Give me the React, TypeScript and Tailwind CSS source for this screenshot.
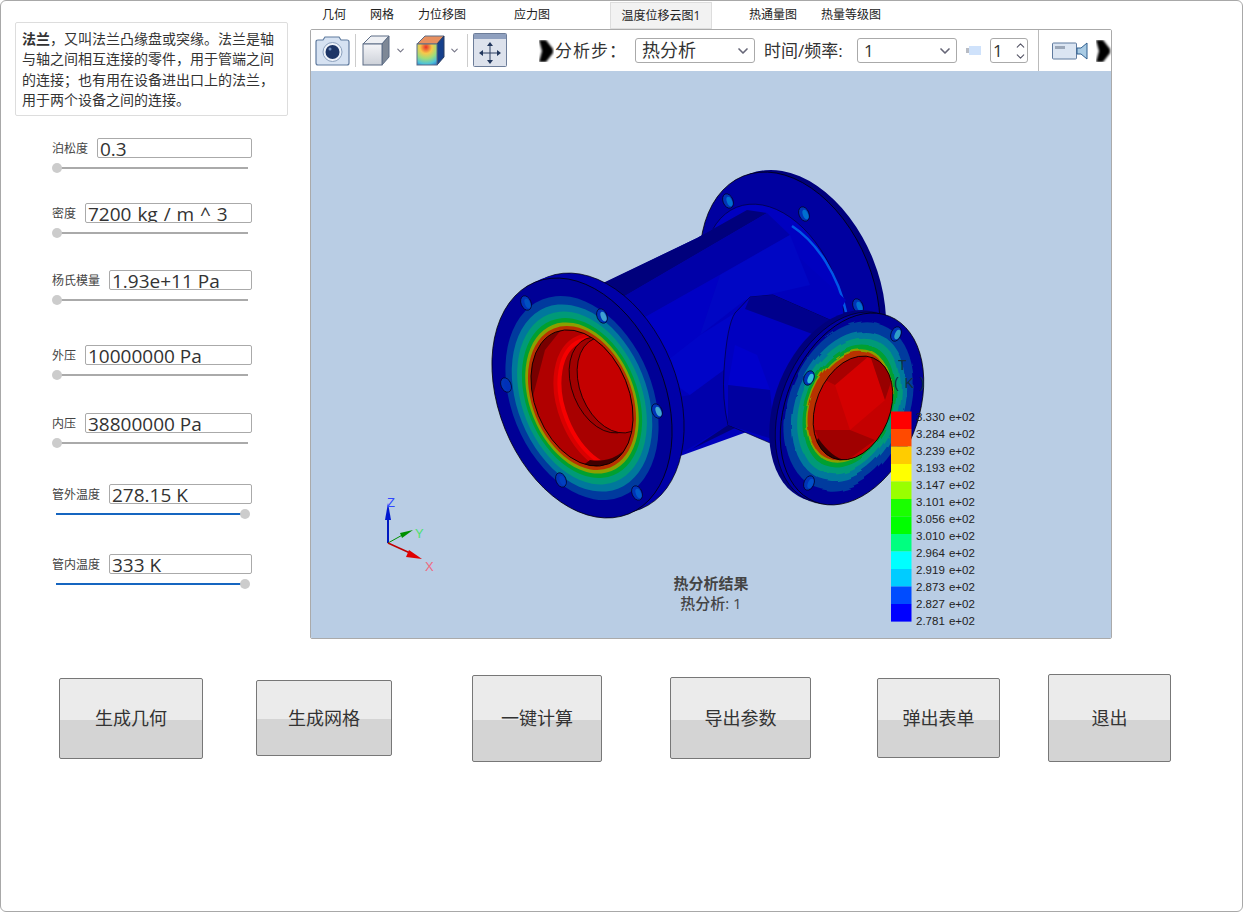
import { ChevronDown, ChevronUp } from 'lucide-react';

const params = [
  { label: '泊松度', value: '0.3', inputWidth: 'w-[155px]', top: 'mt-[22px]', full: false },
  { label: '密度', value: '7200 kg / m ^ 3', inputWidth: 'w-[167px] [word-spacing:1px]', top: 'mt-[25px]', full: false },
  { label: '杨氏模量', value: '1.93e+11 Pa', inputWidth: 'w-[143px]', top: 'mt-[27px]', full: false },
  { label: '外压', value: '10000000 Pa', inputWidth: 'w-[167px]', top: 'mt-[35px]', full: false },
  { label: '内压', value: '38800000 Pa', inputWidth: 'w-[167px]', top: 'mt-[28px]', full: false },
  { label: '管外温度', value: '278.15 K', inputWidth: 'w-[143px]', top: 'mt-[31px]', full: true },
  { label: '管内温度', value: '333 K', inputWidth: 'w-[143px]', top: 'mt-[30px]', full: true },
];

const buttons = [
  { label: '生成几何', cls: 'w-[144px] h-[81px]' },
  { label: '生成网格', cls: 'w-[136px] h-[76px] ml-[53px]' },
  { label: '一键计算', cls: 'w-[130px] h-[87px] ml-[80px]' },
  { label: '导出参数', cls: 'w-[141px] h-[82px] ml-[68px]' },
  { label: '弹出表单', cls: 'w-[123px] h-[80px] ml-[66px]' },
  { label: '退出', cls: 'w-[123px] h-[88px] ml-[48px]' },
];

const tabs = [
  { label: '几何', cls: 'ml-[12px] w-[24px]' },
  { label: '网格', cls: 'ml-[24px] w-[24px]' },
  { label: '力位移图', cls: 'ml-[24px] w-[48px]' },
  { label: '应力图', cls: 'ml-[48px] w-[36px]' },
];

const legendColors = ['#ff0000', '#ff4a00', '#ffcc00', '#ffff00', '#99ff00', '#1aff00', '#00ff00', '#00ff80', '#00ffff', '#00ccff', '#004cff', '#0000ff'];
const legendLabels = ['3.330', '3.284', '3.239', '3.193', '3.147', '3.101', '3.056', '3.010', '2.964', '2.919', '2.873', '2.827', '2.781'];

const leftBands = [
  { s: 1, c: '#000096' },
  { s: 0.85, c: '#003a9e' },
  { s: 0.78, c: '#00789c' },
  { s: 0.72, c: '#009a78' },
  { s: 0.667, c: '#00a030' },
  { s: 0.63, c: '#8aa000' },
  { s: 0.6, c: '#b83000' },
];
const rightBands = [
  { rx: 60, ry: 88, c: '#003a9e' },
  { rx: 53, ry: 78, c: '#00789c' },
  { rx: 48, ry: 71, c: '#009a78' },
  { rx: 43, ry: 64, c: '#00a030' },
  { rx: 40, ry: 59, c: '#8aa000' },
  { rx: 38.5, ry: 56.5, c: '#b83000' },
];

function Ell({ cx, cy, rx, ry, a, ...rest }: { cx: number; cy: number; rx: number; ry: number; a: number } & React.SVGProps<SVGEllipseElement>) {
  return <ellipse cx={cx} cy={cy} rx={rx} ry={ry} transform={`rotate(${a} ${cx} ${cy})`} {...rest} />;
}

function Bolt({ x, y, a = -22, c = '#0034b8', h = '#0070d0' }: { x: number; y: number; a?: number; c?: string; h?: string }) {
  return (
    <g>
      <Ell cx={x} cy={y} rx={5} ry={7.5} a={a} fill={c} stroke="#000020" strokeWidth={0.7} />
      <Ell cx={x + 1.5} cy={y + 0.5} rx={2.6} ry={5} a={a} fill={h} />
    </g>
  );
}

function Flange() {
  return (
    <svg viewBox="311 71 800 567" className="absolute inset-0 h-[567px] w-[800px]">
      <defs>
        <clipPath id="leftHole">
          <ellipse cx={582} cy={398} rx={47} ry={71} transform="rotate(-22 582 398)" />
        </clipPath>
        <clipPath id="rightHole">
          <ellipse cx={853} cy={408} rx={37} ry={54} transform="rotate(22 853 408)" />
        </clipPath>
        <filter id="wobble" x="-10%" y="-10%" width="120%" height="120%">
          <feTurbulence type="fractalNoise" baseFrequency="0.035" numOctaves={2} seed={4} />
          <feDisplacementMap in="SourceGraphic" scale={7} />
        </filter>
      </defs>

      {/* back flange */}
      <Ell cx={796} cy={290} rx={83} ry={125} a={-22} fill="#00007c" />
      <Ell cx={790} cy={292} rx={83} ry={125} a={-22} fill="#0000a0" stroke="#000" strokeWidth={0.7} />
      <Ell cx={774} cy={300} rx={65} ry={100} a={-22} fill="#0000c0" stroke="#000030" strokeWidth={0.6} />
      <path d="M792 226 A65 100 -22 0 1 846 312" fill="none" stroke="#0058e8" strokeWidth={2.5} />
      <Bolt x={728} y={201} />
      <Bolt x={804} y={214} />
      <Bolt x={858} y={306} />

      {/* main tube */}
      <polygon points="596,287 697,238 747,210 846,300 780,420 683,455 640,470" fill="#0000bc" />
      <polygon points="603,283 697,238 747,210 767,213 623,297" fill="#00007c" />
      <polygon points="623,297 767,213 790,235 640,320" fill="#0000a8" />
      <polygon points="640,320 720,275 700,335 655,370" fill="#0000c4" />
      <polygon points="720,275 790,235 810,285 745,300 700,335" fill="#0006c4" />
      <polygon points="655,370 700,335 735,313 724,370 690,395" fill="#0004c8" />
      <polygon points="660,400 690,395 724,370 728,425 683,452" fill="#0000ac" />
      <polygon points="683,455 728,425 735,428 690,450" fill="#000078" />

      {/* branch */}
      <path d="M750 297 L773 295 L830 320 L800 440 L770 443 L728 425 Q722 400 724 370 Q727 325 735 313 Z" fill="#0000c0" stroke="#000020" strokeWidth={0.6} />
      <polygon points="750 297,773 295,830 320,815 335,745 309" fill="#00008c" />
      <polygon points="735,345 757,355 770,390 728,385" fill="#0000cc" />
      <polygon points="728,385 770,390 775,440 728,425" fill="#0000a0" />

      {/* left flange */}
      <Ell cx={594} cy={393} rx={83} ry={125} a={-22} fill="#0000a8" stroke="#000" strokeWidth={0.6} />
      <Ell cx={588} cy={395} rx={83} ry={125} a={-22} fill="#0000a8" />
      {leftBands.map((b) => (
        <Ell key={b.s} cx={582} cy={398} rx={83 * b.s} ry={125 * b.s} a={-22} fill={b.c} stroke={b.s === 1 ? '#000' : 'none'} strokeWidth={0.7} />
      ))}
      <g clipPath="url(#leftHole)">
        <rect x={520} y={320} width={130} height={160} fill="#b00000" />
        <path d="M525 340 L565 325 L545 350 L532 400 Z" fill="#6a0000" opacity={0.8} />
        <Ell cx={606} cy={404} rx={42} ry={68} a={-22} fill="none" stroke="#d80000" strokeWidth={12} />
        <Ell cx={606} cy={404} rx={42} ry={68} a={-22} fill="#a80000" stroke="#f60000" strokeWidth={4} />
        <Ell cx={605} cy={385} rx={33} ry={50} a={-22} fill="#a00000" stroke="#000" strokeWidth={0.7} />
        <Ell cx={613} cy={385} rx={33} ry={50} a={-22} fill="#c40000" stroke="#000" strokeWidth={0.7} />
        <path d="M590 460 Q625 465 640 425 L640 470 L570 475 Z" fill="#400000" />
      </g>
      <Ell cx={582} cy={398} rx={47} ry={71} a={-22} fill="none" stroke="#000" strokeWidth={0.8} />
      <Bolt x={526} y={303} c="#0034b8" h="#0050c0" />
      <Bolt x={602} y={316} h="#40a0d0" />
      <Bolt x={657} y={411} h="#40a8d0" />
      <Bolt x={637} y={493} h="#0058c8" />
      <Bolt x={561} y={480} h="#0040c0" />
      <Bolt x={506} y={385} h="#0030b8" />

      {/* right flange */}
      <Ell cx={841} cy={406} rx={66} ry={100} a={22} fill="#00007c" />
      <Ell cx={847} cy={408} rx={66} ry={100} a={22} fill="#0000a0" stroke="#000" strokeWidth={0.5} />
      <Ell cx={852} cy={409} rx={66} ry={100} a={22} fill="#000096" stroke="#000" strokeWidth={0.7} />
      <g filter="url(#wobble)">
        {rightBands.map((b) => (
          <Ell key={b.rx} cx={849} cy={406} rx={b.rx} ry={b.ry} a={22} fill={b.c} />
        ))}
      </g>
      <g clipPath="url(#rightHole)">
        <rect x={800} y={340} width={110} height={130} fill="#c40000" />
        <polygon points="835,385 870,355 885,400 850,430" fill="#d40000" />
        <polygon points="870,355 895,370 885,400" fill="#980000" />
        <polygon points="850,350 870,355 835,385 825,380" fill="#a80000" />
        <polygon points="815,430 850,430 875,440 845,462 825,455" fill="#a00000" />
        <path d="M818 438 Q835 462 850 460 L840 470 L810 460 Z" fill="#380000" />
      </g>
      <Ell cx={853} cy={408} rx={37} ry={54} a={22} fill="none" stroke="#000" strokeWidth={0.8} />
      <Bolt x={896} y={334} a={22} h="#30a0c8" />
      <Bolt x={809} y={378} a={22} h="#30c0d8" />
      <Bolt x={809} y={483} a={22} h="#0050c8" />

      {/* legend */}
      {legendColors.map((c, i) => (
        <rect key={c} x={891} y={411.5 + i * 17.5} width={20.5} height={17.6} fill={c} />
      ))}
      <g fontFamily='"Liberation Sans", sans-serif' fontSize={11.5} fill="#222">
        {legendLabels.map((l, i) => (
          <text key={l} x={916} y={421 + i * 17} wordSpacing={1}>
            {l} e+02
          </text>
        ))}
        <text x={898} y={370} fontSize={14} fill="#103040">T</text>
        <text x={894} y={388} fontSize={14} fill="#103040" wordSpacing={2}>( K )</text>
      </g>

      {/* axes */}
      <line x1={388} y1={543} x2={388} y2={512} stroke="#0018c0" strokeWidth={2} />
      <polygon points="388,503 391,520 385,520" fill="#0018d0" />
      <line x1={388} y1={543} x2={406} y2={533} stroke="#009000" strokeWidth={1} />
      <polygon points="413,530 402,538 400,533" fill="#009000" />
      <line x1={388} y1={543} x2={410} y2={553} stroke="#c00000" strokeWidth={1.6} />
      <polygon points="422,559 406,557 409,550" fill="#e00000" />
      <g fontFamily='"Liberation Sans", sans-serif' fontSize={13}>
        <text x={387} y={507} fill="#3048ff">Z</text>
        <text x={415} y={538} fill="#50e070">Y</text>
        <text x={425} y={571} fill="#f06880">X</text>
      </g>
    </svg>
  );
}

function Glitch() {
  return (
    <svg viewBox="0 0 15 22" className="h-[22px] w-[15px] shrink-0">
      <g className="blur-[0.8px]">
        <polygon points="0,0 15,0 15,22 0,22" fill="#fff" />
        <polygon points="0,0 7,0 14,9 14,13 7,22 0,22 3,11" fill="#000" />
      </g>
    </svg>
  );
}

function SelectBox({ value, cls }: { value: string; cls: string }) {
  return (
    <div className={`flex h-[25px] shrink-0 items-center justify-between rounded-[3px] border border-[#aaa] pr-[3px] text-[#333] ${cls}`}>
      <span>{value}</span>
      <ChevronDown size={16} strokeWidth={2.5} className="text-[#667]" />
    </div>
  );
}

function Param({ label, value, inputWidth, top, full }: (typeof params)[number]) {
  return (
    <div className={`w-[200px] ${top}`}>
      <div className="flex h-5 items-center justify-between">
        <span className="pt-[2px] text-xs text-[#444]">{label}</span>
        <input
          readOnly
          value={value}
          className={`h-5 rounded-[2px] border border-[#aaa] pl-[2px] pt-[2px] text-[19px] leading-5 text-[#333] outline-none ${inputWidth}`}
        />
      </div>
      <div className="relative h-5">
        {full ? (
          <>
            <div className="absolute left-[4px] top-[9px] h-[2px] w-[189px] bg-[#1565c0]" />
            <div className="absolute left-[188px] top-[5px] size-[10px] rounded-full bg-[#ccc]" />
          </>
        ) : (
          <>
            <div className="absolute left-[5px] top-[9px] h-[2px] w-[191px] bg-[#aaa]" />
            <div className="absolute left-0 top-[5px] size-[10px] rounded-full bg-[#ccc]" />
          </>
        )}
      </div>
    </div>
  );
}

export default function App() {
  return (
    <div className="h-[912px] w-[1243px] overflow-hidden rounded-[6px] border border-[#a8a8a8] bg-white font-['Open_Sans','Noto_Sans_CJK_SC',sans-serif]">
      <div className="flex">
        {/* left panel */}
        <div className="w-[309px] shrink-0 pl-[14px] pt-[21px]">
          <div className="h-[94px] w-[273px] rounded-[2px] border border-[#ddd] px-[6px] pt-[6px] text-sm leading-[20.3px] text-[#333]">
            <div>
              <b>法兰</b>
              <span>，又叫法兰凸缘盘或突缘。法兰是轴</span>
            </div>
            <div>与轴之间相互连接的零件，用于管端之间</div>
            <div>的连接；也有用在设备进出口上的法兰，</div>
            <div>用于两个设备之间的连接。</div>
          </div>
          <div className="pl-[37px]">
            {params.map((p) => (
              <Param key={p.label} {...p} />
            ))}
          </div>
        </div>

        {/* viewer */}
        <div className="w-[802px]">
          <div className="flex h-7 items-center text-xs text-[#222]">
            {tabs.map((t) => (
              <span key={t.label} className={`shrink-0 ${t.cls}`}>
                {t.label}
              </span>
            ))}
            <span className="ml-[60px] mt-[1px] flex h-[27px] w-[102px] shrink-0 items-center justify-center border border-[#ddd] bg-[#f2f2f2]">
              温度位移云图1
            </span>
            <span className="ml-[37px] w-[48px] shrink-0">热通量图</span>
            <span className="ml-[24px] w-[60px] shrink-0">热量等级图</span>
          </div>
          <div className="flex h-[610px] flex-col overflow-hidden rounded-[2px] border border-[#aaa]">
            <div className="flex h-[41px] shrink-0 items-center bg-white text-[17px] text-[#333]">
              <svg viewBox="0 0 35 30" className="ml-[4px] h-[30px] w-[35px] shrink-0">
                <path d="M1 6 Q1 4 3 4 L8 4 L10 1 L24 1 L26 4 L32 4 Q34 4 34 6 L34 27 Q34 29 32 29 L3 29 Q1 29 1 27 Z" fill="#d6e2f2" stroke="#5f7a9e" strokeWidth={1.2} />
                <circle cx={17.5} cy={16} r={9.5} fill="#eef3fa" stroke="#8ba0bd" />
                <circle cx={17.5} cy={16} r={7} fill="#1d3566" />
                <circle cx={15} cy={13} r={1.5} fill="#6f8dbd" />
              </svg>
              <div className="ml-[5px] h-[33px] w-px bg-[#ccc]" />
              <svg viewBox="0 0 28 31" className="ml-[6px] h-[31px] w-[28px] shrink-0">
                <defs>
                  <linearGradient id="cubeFace" x1="0" y1="0" x2="0" y2="1">
                    <stop offset="0" stopColor="#f4f5f8" />
                    <stop offset="1" stopColor="#cdd1d9" />
                  </linearGradient>
                </defs>
                <polygon points="1,9 9,1 27,1 20,9" fill="#eef0f4" stroke="#5c6c85" />
                <polygon points="20,9 27,1 27,22 20,30" fill="#7e8896" stroke="#5c6c85" />
                <rect x={1} y={9} width={19} height={21} fill="url(#cubeFace)" stroke="#5c6c85" />
              </svg>
              <ChevronDown size={11} strokeWidth={2.5} className="ml-[5px] shrink-0 text-[#778]" />
              <svg viewBox="0 0 29 31" className="ml-[10px] h-[31px] w-[29px] shrink-0">
                <defs>
                  <radialGradient id="heatFace" cx="0.45" cy="0.15" r="1">
                    <stop offset="0" stopColor="#e8302a" />
                    <stop offset="0.3" stopColor="#f7c94a" />
                    <stop offset="0.55" stopColor="#9fdc7a" />
                    <stop offset="0.8" stopColor="#4ec3d8" />
                    <stop offset="1" stopColor="#2b6fd0" />
                  </radialGradient>
                </defs>
                <polygon points="1,9 9,1 28,1 21,9" fill="#e89060" stroke="#5c6c85" />
                <polygon points="21,9 28,1 28,22 21,30" fill="#16408c" stroke="#2a3c60" />
                <rect x={1} y={9} width={20} height={21} fill="url(#heatFace)" stroke="#5c6c85" />
              </svg>
              <ChevronDown size={11} strokeWidth={2.5} className="ml-[4px] shrink-0 text-[#778]" />
              <div className="ml-[7px] h-[33px] w-px bg-[#ccc]" />
              <svg viewBox="0 0 34 34" className="-mt-[2px] ml-[6px] h-[34px] w-[34px] shrink-0">
                <rect x={0.5} y={0.5} width={33} height={33} rx={1} fill="#dde2ec" stroke="#6d7d99" />
                <rect x={1} y={1} width={32} height={5} fill="#8fa0bf" />
                <path d="M17 11 V29 M8 20 H26" stroke="#2d3f60" strokeWidth={1} />
                <path d="M17 9 L20 13 H14 Z M17 31 L20 27 H14 Z M6 20 L10 17 V23 Z M28 20 L24 17 V23 Z" fill="#22375c" />
              </svg>
              <div className="ml-[32px] shrink-0">
                <Glitch />
              </div>
              <span className="ml-[1px] w-[80px] shrink-0 whitespace-nowrap tracking-[1px]">分析步：</span>
              <SelectBox value="热分析" cls="w-[120px] pl-[6px] text-[18px]" />
              <span className="ml-[9px] w-[93px] shrink-0 whitespace-nowrap">时间/频率:</span>
              <SelectBox value="1" cls="w-[100px] pl-[6px] text-[17px]" />
              <svg viewBox="0 0 15 9" className="ml-[9px] h-[9px] w-[15px] shrink-0">
                <rect x={0} y={2} width={3} height={5} fill="#b8bcc4" />
                <rect x={3} y={0} width={12} height={9} fill="#cfe2fb" />
              </svg>
              <div className="ml-[9px] flex h-[25px] w-[38px] shrink-0 items-center justify-between rounded-[3px] border border-[#aaa] pl-[2px]">
                <span>1</span>
                <div className="flex flex-col text-[#556]">
                  <ChevronUp size={13} className="-mb-[2px]" />
                  <ChevronDown size={13} />
                </div>
              </div>
              <div className="ml-[10px] h-[41px] w-px shrink-0 bg-[#bbb]" />
              <svg viewBox="0 0 36 18" className="ml-[13px] h-[18px] w-[36px] shrink-0">
                <rect x={0.5} y={1} width={24} height={16} rx={1} fill="#dbe5f2" stroke="#5f7a9e" />
                <rect x={3} y={4} width={10} height={3} fill="#9ba7b8" />
                <path d="M25 6 L29 6 L35 1 V17 L29 12 L25 12 Z" fill="#a9cbe4" stroke="#2f5f8f" />
              </svg>
              <div className="ml-[8px] shrink-0">
                <Glitch />
              </div>
            </div>
            <div className="relative flex-1 bg-[#b9cde4]">
              <Flange />
              <div className="absolute left-[300px] top-[502px] w-[200px] text-center text-[15px] leading-[20px] text-[#444]">
                <div className="font-semibold">热分析结果</div>
                <div className="font-medium">热分析: 1</div>
              </div>
            </div>
          </div>
        </div>
      </div>

      {/* action buttons */}
      <div className="mt-[35px] flex h-[88px] items-center pl-[58px]">
        {buttons.map((b) => (
          <button
            key={b.label}
            className={`shrink-0 rounded-[2px] border border-[#777] bg-[linear-gradient(to_bottom,#ebebeb_52%,#d4d4d4_52%)] pt-[1px] text-[18px] text-[#333] ${b.cls}`}
          >
            {b.label}
          </button>
        ))}
      </div>
    </div>
  );
}
